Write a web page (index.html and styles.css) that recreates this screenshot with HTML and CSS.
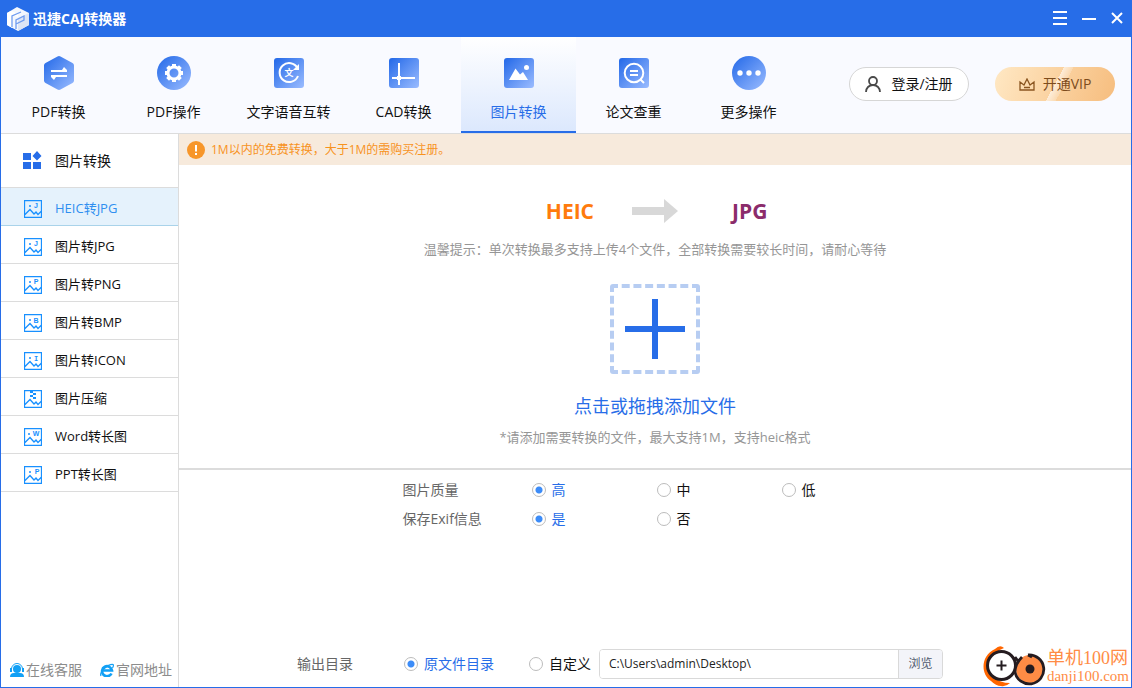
FILE: index.html
```
<!DOCTYPE html>
<html lang="zh-CN">
<head>
<meta charset="utf-8">
<title>迅捷CAJ转换器</title>
<link rel="stylesheet" href="styles.css">
</head>
<body>
<svg class="defs" width="0" height="0" aria-hidden="true">
  <defs>
    <linearGradient id="blue" x1="0" y1="0" x2="1" y2="1"><stop offset="0" stop-color="#2268e8"/><stop offset="1" stop-color="#9bbcff"/></linearGradient>
    <symbol id="picture" viewBox="0 0 18 18"><path d="M.5.5h17v17H.5zM1 14.5l5-5 4 4.500 2-2 2 2.500 3.500-3.500" fill="none" stroke="#1890ff" stroke-width="1.300"/></symbol>
  </defs>
</svg>
<div class="window">
  <header class="titlebar">
    <svg width="22" height="24" viewBox="0 0 22 24"><path d="M10 0L22 6v12l-11 6L0 18V6z" fill="#f4f7fd"/><path d="M11 11l11-5v12l-11 6z" fill="#dde5f5"/><path d="M0 6l4-2 7 3v3L6 8v11l-1 2-5-3z" fill="#fff"/><path d="M5 20V9l9-4M9 22v-9l8-4v4l-8 4" fill="none" stroke="#6f9cf0" stroke-width="1.300"/></svg>
    <h1 class="app-name">迅捷CAJ转换器</h1>
    <div class="window-controls">
      <button class="window-button" aria-label="菜单"><svg width="14" height="14"><path d="M0 1h14M0 7h14M0 13h14" stroke="#fff" stroke-width="2"/></svg></button>
      <button class="window-button" aria-label="最小化"><svg width="14" height="14"><path d="M0 8h14" stroke="#fff" stroke-width="2"/></svg></button>
      <button class="window-button" aria-label="关闭"><svg width="12" height="12"><path d="M1 1l10 10M11 1L1 11" stroke="#fff" stroke-width="2"/></svg></button>
    </div>
  </header>

  <div class="toolbar">
    <nav class="tabs">
      <button class="tab"><svg width="34" height="34" viewBox="0 0 34 34"><path d="M15.500.5q1.500-.8 3 0l12 6.500q1.500.8 1.500 2.500v15q0 1.700-1.500 2.500l-12 6.500q-1.500.8-3 0l-12-6.500Q2 26.200 2 24.500v-15Q2 7.800 3.500 7z" fill="url(#blue)"/><path d="M9 15h16M9 20h16" stroke="#fff" stroke-width="2"/><path d="M20 15v-1l2-3 3 3v1zM9 20h5v1l-2 3-3-3z" fill="#fff"/></svg><span>PDF转换</span></button>
      <button class="tab"><svg width="34" height="34" viewBox="0 0 34 34"><circle cx="17" cy="17" r="17" fill="url(#blue)"/><circle cx="17" cy="17" r="6" fill="none" stroke="#fff" stroke-width="3"/><path d="M17 8v3M17 23v3M8 17h3M23 17h3M10.600 10.600l2.200 2.200M21.200 21.200l2.200 2.200M23.400 10.600l-2.200 2.200M12.800 21.200l-2.200 2.200" stroke="#fff" stroke-width="4"/></svg><span>PDF操作</span></button>
      <button class="tab"><svg width="34" height="34" viewBox="0 0 34 34"><rect x="2" y="2" width="30" height="30" rx="3" fill="url(#blue)"/><path d="M25.500 12a9.500 9.500 0 1 0 .5 8" fill="none" stroke="#fff" stroke-width="2"/><path d="M27 8v6h-6z" fill="#fff"/><text x="17" y="20" class="glyph" font-size="9">文</text></svg><span>文字语音互转</span></button>
      <button class="tab"><svg width="34" height="34" viewBox="0 0 34 34"><rect x="2" y="2" width="30" height="30" rx="3" fill="url(#blue)"/><path d="M12 7v22M5 22h23" stroke="#fff" stroke-width="2"/><path d="M12 19l3 3-3 3-3-3z" fill="#fff" stroke="#fff"/></svg><span>CAD转换</span></button>
      <button class="tab tab-active"><svg width="34" height="34" viewBox="0 0 34 34"><rect x="2" y="2" width="30" height="30" rx="3" fill="url(#blue)"/><path d="M7 24l6.500-11.500 4.500 6 3-2.500L26 24z" fill="#fff"/><circle cx="24.500" cy="11.500" r="2.500" fill="#fff"/></svg><span>图片转换</span></button>
      <button class="tab"><svg width="34" height="34" viewBox="0 0 34 34"><rect x="2" y="2" width="30" height="30" rx="3" fill="url(#blue)"/><circle cx="17" cy="17" r="9.300" fill="none" stroke="#fff" stroke-width="2"/><path d="M13 15h8M13 19h8M23 23l4 4" stroke="#fff" stroke-width="2"/></svg><span>论文查重</span></button>
      <button class="tab"><svg width="34" height="34" viewBox="0 0 34 34"><circle cx="17" cy="17" r="17" fill="url(#blue)"/><g fill="#fff"><circle cx="8" cy="17" r="2.700"/><circle cx="17" cy="17" r="2.700"/><circle cx="26" cy="17" r="2.700"/></g></svg><span>更多操作</span></button>
    </nav>
    <div class="account">
      <button class="pill login"><svg width="16" height="16" viewBox="0 0 16 16"><g fill="none" stroke="#4a4a4a" stroke-width="1.800"><circle cx="8" cy="5" r="4"/><path d="M1 16c0-4 3-7 7-7s7 3 7 7"/></g></svg><span>登录/注册</span></button>
      <button class="pill vip"><svg width="16" height="13" viewBox="0 0 16 13"><path d="M1 12V4l4 3 3-6 3 6 4-3v8zM5 9.500h6" fill="none" stroke="#8a5520" stroke-width="1.300"/></svg><span>开通VIP</span></button>
    </div>
  </div>

  <div class="body">
    <aside class="sidebar">
      <h2 class="side-title"><svg width="19" height="19" viewBox="0 0 19 19"><path d="M0 2h8v7H0zM0 11h8v7H0zM10 11h8v7h-8zM14 0l4.500 5L14 9.500 9.500 5z" fill="#276de8"/></svg>图片转换</h2>
      <nav class="side-list">
        <a class="side-item side-active" href="#"><svg width="18" height="18"><use href="#picture"/><circle cx="6" cy="6" r="1" fill="#1890ff"/><text class="mark" x="12" y="8">J</text></svg>HEIC转JPG</a>
        <a class="side-item" href="#"><svg width="18" height="18"><use href="#picture"/><circle cx="6" cy="6" r="1" fill="#1890ff"/><text class="mark" x="12" y="8">J</text></svg>图片转JPG</a>
        <a class="side-item" href="#"><svg width="18" height="18"><use href="#picture"/><circle cx="6" cy="6" r="1" fill="#1890ff"/><text class="mark" x="12" y="8">P</text></svg>图片转PNG</a>
        <a class="side-item" href="#"><svg width="18" height="18"><use href="#picture"/><circle cx="6" cy="6" r="1" fill="#1890ff"/><text class="mark" x="12" y="9">B</text></svg>图片转BMP</a>
        <a class="side-item" href="#"><svg width="18" height="18"><use href="#picture"/><circle cx="6" cy="6" r="1" fill="#1890ff"/><text class="mark serif" x="12" y="9">I</text></svg>图片转ICON</a>
        <a class="side-item" href="#"><svg width="18" height="18"><use href="#picture"/><path d="M6 1h3v2H6zM9 3h3v2H9zM6 5h3v2H6zM9 7h3v2H9z" fill="#1890ff"/></svg>图片压缩</a>
        <a class="side-item" href="#"><svg width="18" height="18"><use href="#picture"/><circle cx="5" cy="6" r="1" fill="#1890ff"/><text class="mark" x="12" y="8">W</text></svg>Word转长图</a>
        <a class="side-item" href="#"><svg width="18" height="18"><use href="#picture"/><circle cx="6" cy="6" r="1" fill="#1890ff"/><text class="mark" x="13" y="8">P</text></svg>PPT转长图</a>
      </nav>
      <div class="side-links">
        <a class="side-link" href="#"><svg width="14" height="14" viewBox="0 0 14 14"><g fill="#12a0f5"><circle cx="7" cy="6" r="4"/><path d="M0 14q0-4 4-4h6q4 0 4 4zM0 5h2v4H0zM12 5h2v4h-2z"/></g><path d="M1.500 6a5.500 5.500 0 0 1 11 0" fill="none" stroke="#12a0f5"/></svg>在线客服</a>
        <a class="side-link" href="#"><svg width="14" height="14" viewBox="0 0 14 14"><path d="M11.500 10.500A5 5 0 1 1 12 7.500H3" fill="none" stroke="#12a0f5" stroke-width="2.600"/><path d="M1 13C-1 9 8 1 13 1.500q1 1-.5 3.500" fill="none" stroke="#12a0f5" stroke-width="1.200"/></svg>官网地址</a>
      </div>
    </aside>

    <main class="content">
      <p class="notice"><svg width="18" height="18" viewBox="0 0 18 18"><circle cx="9" cy="9" r="9" fill="#f7962a"/><path d="M9 4v6.500M9 12v2" stroke="#fff" stroke-width="2"/></svg>1M以内的免费转换，大于1M的需购买注册。</p>
      <section class="upload">
        <div class="formats">
          <strong class="from">HEIC</strong>
          <svg width="46" height="24"><path d="M0 8h32V0l14 12-14 12v-8H0z" fill="#d8d8d8"/></svg>
          <strong class="to">JPG</strong>
        </div>
        <p class="hint">温馨提示：单次转换最多支持上传4个文件，全部转换需要较长时间，请耐心等待</p>
        <button class="add-box" aria-label="添加文件"><svg width="90" height="90"><path d="M0 2h90M0 88h90M2 0v90M88 0v90" fill="none" stroke="#b7cdf2" stroke-width="4" stroke-dasharray="8 3.714"/><path d="M15 45h60M45 15v60" stroke="#276de8" stroke-width="6"/></svg></button>
        <p class="add-text">点击或拖拽添加文件</p>
        <p class="hint">*请添加需要转换的文件，最大支持1M，支持heic格式</p>
      </section>
      <section class="settings">
        <div class="setting-row"><span>图片质量</span>
          <label class="choice"><input type="radio" name="quality" checked><span>高</span></label>
          <label class="choice"><input type="radio" name="quality"><span>中</span></label>
          <label class="choice"><input type="radio" name="quality"><span>低</span></label>
        </div>
        <div class="setting-row"><span>保存Exif信息</span>
          <label class="choice"><input type="radio" name="exif" checked><span>是</span></label>
          <label class="choice"><input type="radio" name="exif"><span>否</span></label>
        </div>
      </section>
      <footer class="output">
        <span>输出目录</span>
        <label class="choice"><input type="radio" name="dir" checked><span>原文件目录</span></label>
        <label class="choice"><input type="radio" name="dir"><span>自定义</span></label>
        <div class="path"><input class="path-input" type="text" aria-label="输出目录" value="C:\Users\admin\Desktop\"><button class="browse">浏览</button></div>
      </footer>
    </main>
  </div>
  <div class="badge">
    <svg width="64" height="42" viewBox="0 0 64 42"><path d="M21 3q-4-4-9 1C-2 10-3 29 8 36q5 5 10 5 5 1 9-3-10 0-16-6C2 24 4 10 21 3z" fill="#f60"/><circle cx="18.500" cy="20.500" r="14" fill="#fff" stroke="#251c20" stroke-width="3"/><path d="M13.500 20.500h10M18.500 15.500v10" stroke="#251c20" stroke-width="2"/><circle cx="47" cy="24" r="14" fill="#ff8c45"/><path d="M32 12l3 4M45 10a14.500 14.500 0 1 1-13 17q0-8 7-15M45 10l4 2" fill="none" stroke="#251c20" stroke-width="2.800"/><circle cx="47" cy="24" r="4.500" fill="#251c20"/></svg>
    <div class="badge-text"><span class="badge-name">单机100网</span><span class="badge-url">danji100.com</span></div>
  </div>
</div>
</body>
</html>
```

FILE: styles.css
```
* { box-sizing: border-box; }
body { margin: 0; font: 14px/20px "Open Sans", "Noto Sans CJK SC", sans-serif; color: #111; }
h1, h2, p { margin: 0; font-weight: 400; }
button, input { font: inherit; color: inherit; margin: 0; }
button { padding: 0; border: 0; background: none; cursor: pointer; }
a { color: inherit; text-decoration: none; }
svg { display: block; flex: none; }
.defs { position: absolute; }
.window { position: relative; display: flex; flex-direction: column; min-height: 100vh; border: 1px solid #276de8; border-top: 0; background: #fff; }

.titlebar { display: flex; align-items: center; height: 37px; padding: 0 8px 0 6px; background: #276de8; color: #fff; }
.app-name { margin-left: 4px; font-size: 14px; font-weight: 700; }
.window-controls { display: flex; gap: 15px; margin-left: auto; }
.window-button { display: flex; align-items: center; min-width: 12px; height: 22px; padding-bottom: 2px; }

.toolbar { display: flex; justify-content: space-between; height: 97px; border-bottom: 1px solid #dcdcdc; background: #f9faff; }
.tabs { display: flex; }
.tab { display: flex; flex-direction: column; align-items: center; gap: 12px; width: 115px; padding-top: 19px; border-bottom: 2px solid transparent; white-space: nowrap; }
.tab-active { border-color: #276de8; background: linear-gradient(#fff, #dce8fd); color: #276de8; }
.account { display: flex; align-items: flex-start; gap: 26px; padding: 30px 16px 0 0; }
.pill { display: flex; align-items: center; justify-content: center; gap: 10px; width: 120px; height: 34px; border-radius: 17px; }
.login { border: 1px solid #d6d6d6; background: #fff; }
.vip { gap: 8px; background: linear-gradient(118deg, transparent 50%, #fff9 50%, #fff3 57%, transparent 57%), linear-gradient(110deg, #ffe8c4, #f6bd7e); color: #7d4c1c; }

.body { display: flex; flex: 1; }
.sidebar { display: flex; flex-direction: column; width: 178px; border-right: 1px solid #dcdcdc; }
.side-title { display: flex; align-items: center; gap: 13px; height: 54px; padding-left: 22px; border-bottom: 1px solid #dcdcdc; font-size: 14px; }
.side-item { display: flex; align-items: center; gap: 13px; height: 38px; padding: 2px 0 0 23px; border-bottom: 1px solid #dcdcdc; font-size: 13px; line-height: 18px; }
.side-item svg { margin-top: 3px; }
.side-active { border-color: #a9d3ea; background: #e5f2fc; color: #2f8ff0; }
.mark { font: 700 7px "Liberation Sans", sans-serif; fill: #1890ff; text-anchor: middle; }
.serif { font-family: "Liberation Mono", monospace; }
.glyph { fill: #fff; text-anchor: middle; font-weight: 700; }
.side-links { display: flex; justify-content: space-between; margin-top: auto; padding: 0 6px 7px 9px; color: #8c8c8c; }
.side-link { display: flex; align-items: center; gap: 2px; }

.content { display: flex; flex-direction: column; flex: 1; min-width: 0; }
.notice { display: flex; align-items: center; gap: 6px; height: 31px; padding: 1px 0 0 8px; background: #f7eadc; color: #f7931e; font-size: 12px; }
.upload { display: flex; flex-direction: column; align-items: center; height: 305px; padding-top: 32px; border-bottom: 2px solid #dcdcdc; }
.formats { display: grid; grid-template-columns: 1fr 46px 1fr; align-items: center; column-gap: 38px; width: 276px; height: 28px; font-size: 21px; }
.from { color: #ff7b0d; text-align: right; }
.to { padding-left: 16px; color: #8b2c6b; }
.hint { margin-top: 14px; color: #969696; font-size: 13px; }
.add-box { margin-top: 25px; overflow: hidden; border-radius: 3px; }
.add-text { margin-top: 20px; color: #276de8; font-size: 18px; line-height: 24px; }
.add-text + .hint { margin-top: 9px; }
.settings { display: flex; flex-direction: column; align-items: center; gap: 9px; padding-top: 10px; }
.setting-row { display: grid; grid-template-columns: 129px 125px 125px 126px; color: #666; }
.choice { display: flex; align-items: center; gap: 6px; color: #111; white-space: nowrap; }
.choice input { appearance: none; width: 14px; height: 14px; border: 1px solid #bcbcbc; border-radius: 50%; background: #fff; }
.choice input:checked { background: radial-gradient(circle, #3c8cf8 3px, #fff 4px); }
.choice input:checked + span { color: #276de8; }
.output { display: grid; grid-template-columns: 107px 125px 70px 344px; align-items: center; justify-content: center; margin-top: auto; padding: 0 70px 8px 0; color: #666; }
.path { display: flex; height: 30px; border: 1px solid #d9d9d9; border-radius: 4px; overflow: hidden; }
.path-input { flex: 1; min-width: 0; padding: 0 9px; border: 0; color: #222; font-size: 12px; }
.browse { width: 44px; border-left: 1px solid #d9d9d9; background: #f3f4f9; color: #515a6e; font-size: 12px; }

.badge { position: absolute; right: 2px; bottom: 0; display: flex; align-items: center; color: #ff8c45; white-space: nowrap; }
.badge-text { display: flex; flex-direction: column; }
.badge-name { font: 18px/20px "Liberation Serif", "Noto Sans CJK SC", serif; }
.badge-url { font: 15px/16px "Liberation Serif", serif; }
```
